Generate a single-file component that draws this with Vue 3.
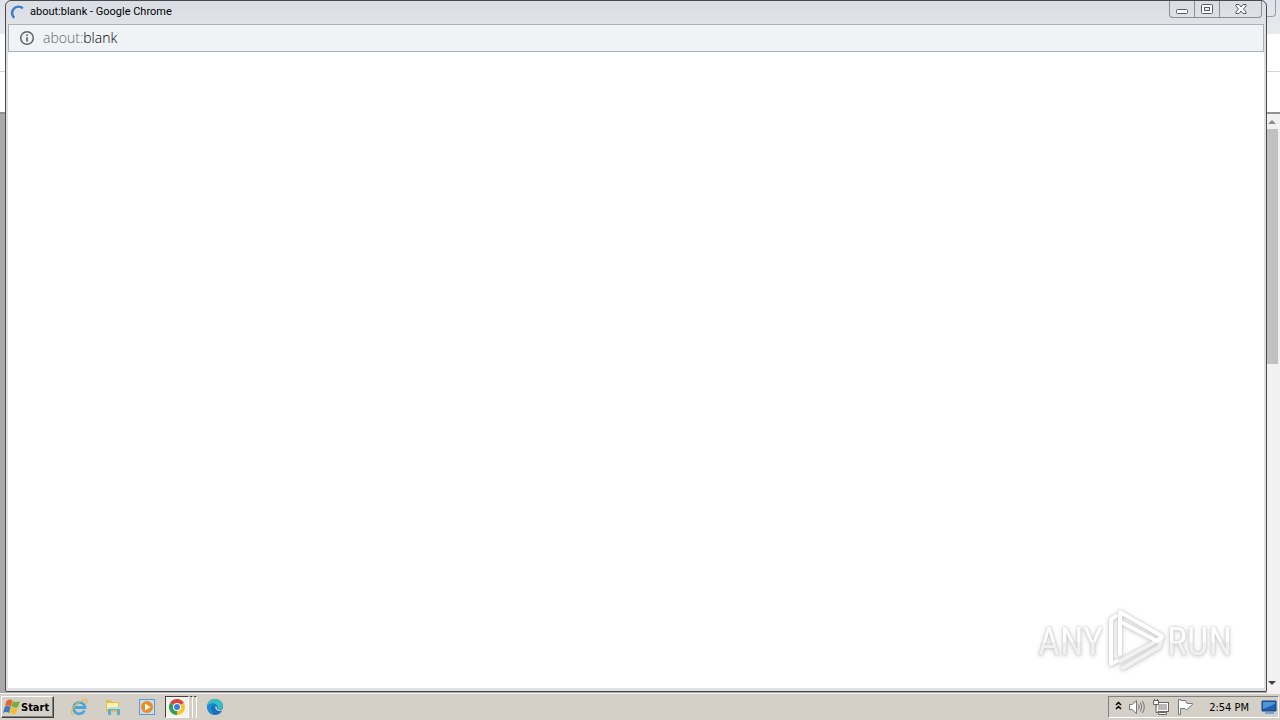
<script setup>
import { ref } from 'vue'

const pageTitle = ref('about:blank - Google Chrome')
const scheme = ref('about:')
const path = ref('blank')
const clock = ref('2:54 PM')
</script>

<template>
  <div class="screen">
    <main class="desktop">
      <!-- browser window behind the popup -->
      <div class="back-window">
        <div class="back-tabs"></div>
        <div class="back-toolbar"></div>
        <div class="back-bookmarks"></div>
        <div class="back-page">
          <div class="scrollbar">
            <svg class="scroll-arrow" width="13" height="15" viewBox="0 0 13 15"><path d="M1 10h8L5 6z" fill="#8b8b8b" /></svg>
            <div class="scroll-track"><div class="scroll-thumb"></div></div>
            <svg class="scroll-arrow" width="13" height="18" viewBox="0 0 13 18"><path d="M1 6h8L5 10z" fill="#404040" /></svg>
          </div>
        </div>
      </div>

      <section class="popup">
        <header class="titlebar">
          <svg class="spinner" width="16" height="16" viewBox="0 0 16 16">
            <path d="M4.2 13.8A6.2 6.2 0 0 1 12.800 4.3" fill="none" stroke="#3b78c9" stroke-width="2.4" />
          </svg>
          <span class="title">{{ pageTitle }}</span>
          <div class="window-buttons">
            <button class="win-btn" aria-label="Minimize">
              <svg width="14" height="12" viewBox="0 0 14 12"><rect x="1.5" y="6.5" width="11" height="4" rx="1" fill="#fff" stroke="#555b68" /></svg>
            </button>
            <button class="win-btn" aria-label="Restore">
              <svg width="14" height="12" viewBox="0 0 14 12">
                <rect x="1.5" y="1.5" width="11" height="9" rx="1" fill="#fff" stroke="#555b68" />
                <rect x="4.5" y="4.5" width="5" height="3" fill="#e8ebf1" stroke="#555b68" />
              </svg>
            </button>
            <button class="win-btn close" aria-label="Close">
              <svg width="14" height="12" viewBox="0 0 14 12">
                <path d="M2 1.5H5L7 4L9 1.5H12V3L9.5 6L12 9V10.5H9L7 8L5 10.5H2V9L4.5 6L2 3Z" fill="#fff" stroke="#555b68" />
              </svg>
            </button>
          </div>
        </header>

        <div class="address">
          <svg width="16" height="16" viewBox="0 0 16 16">
            <circle cx="8" cy="8" r="6.3" fill="none" stroke="#5f6368" stroke-width="1.5" />
            <path d="M7.2 7.2h1.7v4.3H7.2zM7.2 4.5h1.7v1.6H7.2z" fill="#5f6368" />
          </svg>
          <span class="url"><span class="scheme">{{ scheme }}</span>{{ path }}</span>
        </div>

        <div class="page">
          <div class="watermark">
            <span>ANY</span>
            <svg width="60" height="64" viewBox="0 0 60 64">
              <g fill="none" stroke-width="4" stroke-linejoin="round" stroke-linecap="round">
                <path d="M18 60L54 39L57 29" stroke="#f2f2f2" />
                <path d="M11 8L6 11V56L12 53" stroke="#fff" />
                <path d="M15 53L55 31" stroke="#f2f2f2" />
                <path d="M15 46V4L57 28L52 33L16 14" stroke="#fff" />
              </g>
            </svg>
            <span>RUN</span>
          </div>
        </div>
      </section>
    </main>

    <footer class="taskbar">
      <button class="start">
        <svg width="17" height="16" viewBox="0 0 17 16">
          <path d="M3.5 2Q6.5 -.5 9.5 1.5L8 7.5Q5 5.5 2 7.5Z" fill="#e8642c" />
          <path d="M10 2Q13 4 17 2L15 8Q11.5 9.5 8.5 7.5Z" fill="#7aae3a" />
          <path d="M1.7 8Q5 6 7.7 8L6 14Q3 12 0 14Z" fill="#3e78bd" />
          <path d="M8.2 8.3Q11 10 14.8 8.5L13 14.5Q9.5 16 6.5 14Z" fill="#f1bd35" />
        </svg>
        <span>Start</span>
      </button>

      <nav class="launcher">
        <button class="task" aria-label="Internet Explorer">
          <svg width="18" height="18" viewBox="0 0 18 18">
            <path d="M14.5 12.5A5.7 5.7 0 1 1 15 9.5H4" fill="none" stroke="#4ba6dc" stroke-width="2.8" />
            <path d="M3 16.5C-1 16 3 7 11 3C16 .5 18.5 1.5 16 6" fill="none" stroke="#e2bd45" stroke-width="1.3" />
          </svg>
        </button>
        <button class="task" aria-label="Windows Explorer">
          <svg width="18" height="18" viewBox="0 0 18 18">
            <path d="M2 2H7L8 4H15V14H2Z" fill="#dfbf57" />
            <path d="M3 5H14V11H3Z" fill="#fff0a5" />
            <path d="M4 17V9H16V17H13V12H7V17Z" fill="#63acd0" />
            <path d="M4 9H16V11H4Z" fill="#b5e0ec" />
          </svg>
        </button>
        <button class="task" aria-label="Media Player">
          <svg width="18" height="18" viewBox="0 0 18 18">
            <rect x="1.5" y="1.5" width="15" height="15" fill="#c5def1" stroke="#5f9bcb" />
            <circle cx="9" cy="9" r="6" fill="#f08a22" />
            <path d="M7 5.5V12.5L12.5 9Z" fill="#fff" />
          </svg>
        </button>
        <button class="task active" aria-label="Google Chrome">
          <span class="task-face">
            <svg width="18" height="18" viewBox="0 0 18 18">
              <path d="M9 9L2.07 5A8 8 0 0 1 15.93 5Z" fill="#dc4437" />
              <path d="M9 9V17A8 8 0 0 1 2.07 5Z" fill="#2f9e58" />
              <path d="M9 9L15.93 5A8 8 0 0 1 9 17Z" fill="#f6c52e" />
              <circle cx="9" cy="9" r="4" fill="#fff" />
              <circle cx="9" cy="9" r="3" fill="#3e7de0" />
            </svg>
          </span>
          <span class="stack"></span>
          <span class="stack"></span>
        </button>
        <button class="task" aria-label="Microsoft Edge">
          <svg width="18" height="18" viewBox="0 0 18 18">
            <circle cx="9" cy="9" r="8" fill="#1472bd" />
            <path d="M1.2 8C2 3 5.5 1 9 1C14 1 17 4.5 17 8C17 11 13.5 12.5 11 11C13 8 9.5 5 6 5.5C3.5 6 2 7 1.2 8Z" fill="#36bfc2" />
            <path d="M6 8C4 11 6 16 10.5 17C5 17.5 1 13.5 1.2 8C3 5.5 7 5 9 7Z" fill="#1b8bd3" />
            <path d="M9.5 8C8.5 11 11 14 16 12.5L18 13V9C16.5 12 13 12.5 10.5 11Q12 9.5 9.5 8Z" fill="#d4d0c8" />
          </svg>
        </button>
      </nav>

      <div class="tray">
        <button class="tray-btn" aria-label="Show hidden icons">
          <svg width="7" height="12" viewBox="0 0 7 12"><path d="M1 4L3.5 1.5L6 4M1 8L3.5 5.5L6 8" fill="none" stroke="#000" stroke-width="1.5" /></svg>
        </button>
        <button class="tray-btn" aria-label="Volume">
          <svg width="18" height="18" viewBox="0 0 18 18">
            <path d="M1.5 6.5H4L8.5 2.5V15.5L4 11.5H1.5Z" fill="#fff" stroke="#777" />
            <path d="M10.5 6.5Q12 9 10.5 11.5M12.5 4.5Q15 9 12.5 13.5M14.5 3Q18 9 14.5 15" fill="none" stroke="#777" />
          </svg>
        </button>
        <button class="tray-btn" aria-label="Network">
          <svg width="18" height="18" viewBox="0 0 18 18">
            <rect x="4.5" y="4.5" width="12" height="9" fill="#fff" stroke="#666" />
            <rect x="6" y="6" width="9" height="6" fill="#b8b8b8" />
            <path d="M6.5 14.5H14.5V16.5H6.5Z" fill="#fff" stroke="#666" />
            <path d="M1.5 2.5H6.5V6.5H1.5ZM2.5 1V2.5M5.5 1V2.5M4 6.5V14.5H6" fill="#fff" stroke="#666" />
          </svg>
        </button>
        <button class="tray-btn" aria-label="Action Center">
          <svg width="18" height="18" viewBox="0 0 18 18">
            <path d="M2.5 1.5V16.5H4.5V10.5H9L10.5 12L16.5 6.5V5.5H11L9.5 2.5H4.5V1.5Z" fill="#fff" stroke="#777" />
          </svg>
        </button>
        <time class="clock">{{ clock }}</time>
        <button class="tray-btn" aria-label="Show desktop">
          <svg width="16" height="14" viewBox="0 0 16 14">
            <path d="M1 1H15V11H1Z" fill="#1f5fae" stroke="#16457f" />
            <path d="M2 2H14V4L2 9Z" fill="#4d96dc" />
            <path d="M4 13H13" stroke="#79a5d0" stroke-width="2" />
          </svg>
        </button>
      </div>
    </footer>
  </div>
</template>

<style>
body {
  margin: 0;
  overflow: hidden;
}
</style>

<style scoped>
.screen {
  display: flex;
  flex-direction: column;
  height: 100vh;
  font-family: Tahoma, 'DejaVu Sans Condensed', 'DejaVu Sans', sans-serif;
  font-size: 11px;
  color: #000;
}
svg {
  display: block;
  flex: none;
}
button {
  font: inherit;
  color: inherit;
  border: 0;
  padding: 0;
  background: none;
}
.desktop {
  position: relative;
  flex: 1;
  min-height: 0;
}
.back-window {
  display: flex;
  flex-direction: column;
  height: 100%;
  background: #fff;
}
.back-tabs {
  height: 34px;
  background: linear-gradient(#dfe2e9, #e8eaed);
  position: relative;
}
/* caption button peeking out past the popup */
.back-tabs::after {
  content: '';
  position: absolute;
  top: 0;
  right: 4px;
  width: 20px;
  height: 16px;
  border: 1px solid #9a9da5;
  border-top: 0;
  border-radius: 0 0 4px 4px;
}
.back-toolbar {
  height: 37px;
  border-bottom: 1px solid #d4d6d9;
}
.back-bookmarks {
  height: 40px;
  border-bottom: 2px solid #919191;
}
.back-page {
  flex: 1;
  display: flex;
  justify-content: flex-end;
  background: #a9a9a9;
}
.scrollbar {
  display: flex;
  flex-direction: column;
  width: 13px;
  background: #f1f1f1;
}
.scroll-track {
  flex: 1;
}
.scroll-thumb {
  width: 11px;
  height: 43%;
  background: #c1c1c1;
}
.popup {
  position: absolute;
  inset: 0 13px 1px 5px;
  display: flex;
  flex-direction: column;
  box-sizing: border-box;
  padding: 0 2px 3px;
  border: 1px solid #484950;
  border-radius: 6px 6px 2px 2px;
  background: #dfe0e2;
}
.titlebar {
  display: flex;
  align-items: flex-start;
  height: 23px;
  padding-left: 2px;
  background: linear-gradient(#d9dde4, #e0e3e8);
  border-radius: 5px 5px 0 0;
}
.spinner {
  margin-top: 3px;
}
.title {
  flex: 1;
  padding-left: 4px;
  font-family: Tahoma, Roboto, sans-serif;
  line-height: 22px;
}
.window-buttons {
  display: flex;
  margin-right: 2px;
  border: 1px solid #8b8e98;
  border-top: 0;
  border-radius: 0 0 4px 4px;
}
.win-btn {
  display: flex;
  align-items: center;
  justify-content: center;
  width: 25px;
  height: 16px;
  border-right: 1px solid #8b8e98;
}
.win-btn.close {
  width: 41px;
  border-right: 0;
}
.address {
  display: flex;
  align-items: center;
  gap: 8px;
  height: 26px;
  padding-left: 10px;
  border: 1px solid #adb0b4;
  background: #f0f3f5;
}
.url {
  font-family: 'Open Sans', 'Noto Sans', sans-serif;
  font-size: 14px;
  font-weight: 300;
  line-height: 20px;
  color: #000;
}
.scheme {
  color: #5f6368;
}
.page {
  flex: 1;
  display: flex;
  align-items: flex-end;
  justify-content: flex-end;
  background: #fff;
}
.watermark {
  display: flex;
  align-items: center;
  gap: 2px;
  padding: 0 32px 16px 0;
  font-family: 'Liberation Sans Narrow', 'Roboto Condensed', sans-serif;
  font-size: 38px;
  line-height: 40px;
  color: #fff;
  filter: drop-shadow(0 0 1px #c4c4c4) drop-shadow(0 1px 2px #d4d4d4);
}
.watermark span {
  padding-top: 4px;
  background: linear-gradient(#fff 54%, #f0f0f0 54%);
  background-clip: text;
  color: transparent;
}
.taskbar {
  display: flex;
  align-items: center;
  justify-content: space-between;
  box-sizing: border-box;
  height: 27px;
  padding: 0 1px;
  border-top: 1px solid #f5f3ef;
  background: #d4d0c8;
}
.start {
  display: flex;
  align-items: center;
  gap: 1px;
  box-sizing: border-box;
  width: 53px;
  height: 22px;
  padding-left: 1px;
  border: 1px solid;
  border-color: #fff #404040 #404040 #fff;
  box-shadow: inset -1px -1px 0 #808080;
  font-weight: bold;
}
.launcher {
  display: flex;
  flex: 1;
  align-items: center;
  gap: 2px;
  padding-left: 9px;
}
.task {
  display: flex;
  align-items: center;
  justify-content: center;
  width: 32px;
  height: 22px;
}
.task.active {
  justify-content: flex-start;
  gap: 1px;
}
.task-face {
  display: flex;
  align-items: center;
  justify-content: center;
  box-sizing: border-box;
  width: 24px;
  height: 22px;
  border: 1px solid;
  border-color: #404040 #fff #fff #404040;
  background: #f3f2ef;
}
.stack {
  box-sizing: border-box;
  width: 3px;
  height: 22px;
  border-top: 1px solid #404040;
  border-right: 1px solid #fff;
}
.tray {
  display: flex;
  align-items: center;
  gap: 6px;
  box-sizing: border-box;
  height: 22px;
  padding: 0 1px 0 6px;
  border: 1px solid;
  border-color: #808080 #fff #fff #808080;
}
.clock {
  padding: 0 6px 0 9px;
}
</style>
